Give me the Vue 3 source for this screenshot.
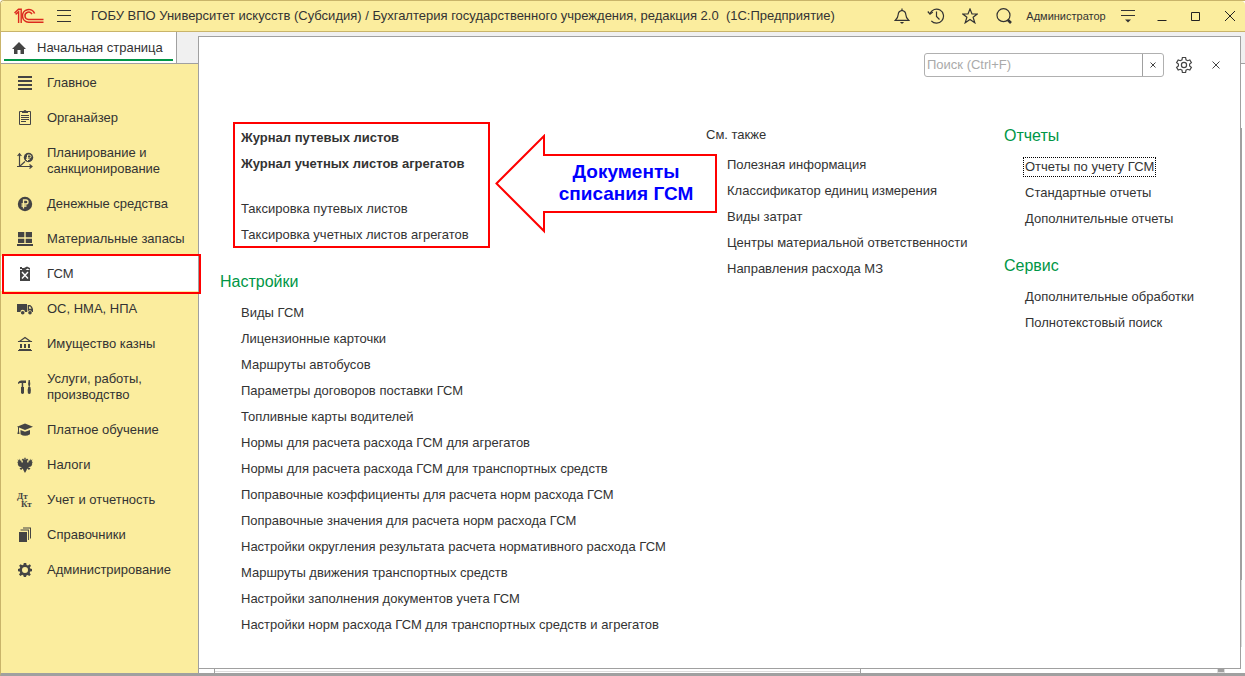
<script setup>
const sections = [
  { icon: 'lines', title: 'Главное' },
  { icon: 'clipboard', title: 'Органайзер' },
  { icon: 'plan', title: 'Планирование и санкционирование' },
  { icon: 'ruble', title: 'Денежные средства' },
  { icon: 'stock', title: 'Материальные запасы' },
  { icon: 'fuel', title: 'ГСМ', active: true },
  { icon: 'truck', title: 'ОС, НМА, НПА' },
  { icon: 'bank', title: 'Имущество казны' },
  { icon: 'tools', title: 'Услуги, работы, производство' },
  { icon: 'cap', title: 'Платное обучение' },
  { icon: 'eagle', title: 'Налоги' },
  { icon: 'ledger', title: 'Учет и отчетность' },
  { icon: 'books', title: 'Справочники' },
  { icon: 'gear', title: 'Администрирование' },
]
const journals = ['Журнал путевых листов', 'Журнал учетных листов агрегатов']
const taxation = ['Таксировка путевых листов', 'Таксировка учетных листов агрегатов']
const settings = [
  'Виды ГСМ',
  'Лицензионные карточки',
  'Маршруты автобусов',
  'Параметры договоров поставки ГСМ',
  'Топливные карты водителей',
  'Нормы для расчета расхода ГСМ для агрегатов',
  'Нормы для расчета расхода ГСМ для транспортных средств',
  'Поправочные коэффициенты для расчета норм расхода ГСМ',
  'Поправочные значения для расчета норм расхода ГСМ',
  'Настройки округления результата расчета нормативного расхода ГСМ',
  'Маршруты движения транспортных средств',
  'Настройки заполнения документов учета ГСМ',
  'Настройки норм расхода ГСМ для транспортных средств и агрегатов',
]
const seeAlso = [
  'Полезная информация',
  'Классификатор единиц измерения',
  'Виды затрат',
  'Центры материальной ответственности',
  'Направления расхода МЗ',
]
const reports = ['Отчеты по учету ГСМ', 'Стандартные отчеты', 'Дополнительные отчеты']
const service = ['Дополнительные обработки', 'Полнотекстовый поиск']
</script>

<template>
  <div class="window">
    <header class="titlebar">
      <svg class="logo" width="30" height="16" viewBox="0 0 30 16" fill="none" stroke="#dc2a1e">
        <path d="M.5 5 4.5 1.2H7.2V15M1.6 6.4 4.6 3.8V15" stroke-width="1.4" />
        <path d="M20.6 5.5A6.3 6.3 0 1 0 14.5 14.2H29.5" stroke-width="1.6" />
        <path d="M18 6.2A3.7 3.7 0 1 0 14.5 11.5H29.5" stroke-width="1.5" />
      </svg>
      <button class="burger" aria-label="Главное меню">
        <svg width="14" height="12" viewBox="0 0 14 12" stroke="#333"><path d="M0 .5H14M0 5.5H14M0 11.5H14" /></svg>
      </button>
      <h1>ГОБУ ВПО Университет искусств (Субсидия) / Бухгалтерия государственного учреждения, редакция 2.0&nbsp; (1С:Предприятие)</h1>
      <button class="tool" aria-label="Уведомления">
        <svg width="16" height="16" viewBox="0 0 16 16" fill="none" stroke="#333" stroke-width="1.2"><path d="M1.2 12.4Q4.2 9.6 4.2 6.5Q4.4 3.2 8 2.4Q11.6 3.2 11.8 6.5Q11.8 9.6 14.8 12.4ZM8 2.4V.5" /><path d="M6 14H10L8.8 15.5H7.2Z" fill="#333" stroke="none" /></svg>
      </button>
      <button class="tool" aria-label="История">
        <svg width="18" height="16" viewBox="0 0 18 16" fill="none" stroke="#333" stroke-width="1.2"><path d="M3 5.5A7 7 0 1 1 4.3 12.8M9.5 3.5V8.5L12.5 11.5" /><path d="M.8 3.5 3 6.2 5.8 4" /></svg>
      </button>
      <button class="tool" aria-label="Избранное">
        <svg width="16" height="16" viewBox="0 0 16 16" fill="none" stroke="#333" stroke-width="1.2"><path d="M8 1 10 6H15.2L11.1 9.3 12.8 14.8 8 11.5 3.2 14.8 4.9 9.3.8 6H6Z" /></svg>
      </button>
      <button class="tool" aria-label="Поиск">
        <svg width="16" height="16" viewBox="0 0 16 16" fill="none" stroke="#333" stroke-width="1.2"><circle cx="7.5" cy="7.2" r="6.5" /><path d="M11.7 11.8 15 15" stroke-width="2.6" /></svg>
      </button>
      <button class="user">Администратор</button>
      <button class="tool" aria-label="Настройки окна">
        <svg width="14" height="14" viewBox="0 0 14 14" stroke="#333"><path d="M0 1.5H14M0 6.5H14" /><path d="M4 10.5H10L7 13.5Z" fill="#333" stroke="none" /></svg>
      </button>
      <button class="tool" aria-label="Свернуть">
        <svg width="10" height="10" viewBox="0 0 10 10" stroke="#222"><path d="M.5 9.5H9.5" /></svg>
      </button>
      <button class="tool" aria-label="Развернуть">
        <svg width="10" height="10" viewBox="0 0 10 10" fill="none" stroke="#222"><path d="M.5 1.5H8.5V9.5H.5Z" /></svg>
      </button>
      <button class="tool last" aria-label="Закрыть">
        <svg width="12" height="12" viewBox="0 0 12 12" stroke="#222"><path d="M1 1 11 11M11 1 1 11" /></svg>
      </button>
    </header>

    <div class="body">
      <div class="left">
        <div class="tabs">
          <a href="#" class="tab">
            <svg width="14" height="12" viewBox="0 0 14 12" fill="#444"><path d="M7 0 14 7H12V12H8.5V8H5.5V12H2V7H0Z" /></svg>
            Начальная страница
          </a>
        </div>
        <nav class="sections">
          <a v-for="s in sections" :key="s.icon" href="#" :class="{ active: s.active }">
            <svg class="icon" width="18" height="18" viewBox="0 0 18 18" fill="#444" stroke="none">
              <path v-if="s.icon === 'lines'" d="M2 2H16V4H2ZM2 6H16V8H2ZM2 10H16V12H2ZM2 14H16V16H2Z" />
              <g v-else-if="s.icon === 'clipboard'">
                <path d="M3.5 2.5H14.5V15.5H3.5Z" fill="none" stroke="#444" />
                <path d="M6 4V2H7.5Q9 0 10.5 2H12V4ZM5 6H13V7H5ZM5 8H13V9H5ZM5 10H13V11H5ZM5 12H10V13H5Z" />
              </g>
              <g v-else-if="s.icon === 'plan'">
                <path d="M3.5 2.5V15M1 14.5H15M3.5 14.5 9 9.5M1.6 4 3.5 1.6 5.4 4M13.5 12.5 16 14.5 13.5 16.5" fill="none" stroke="#444" stroke-width="1.2" />
                <circle cx="12.5" cy="5.5" r="4.7" />
                <path d="M11.5 9V3H13.5Q15 3 15 4.5Q15 6 13.5 6H10M10 7.5H13.5" fill="none" stroke="#fbed9e" />
              </g>
              <g v-else-if="s.icon === 'ruble'">
                <circle cx="9" cy="9" r="7.2" />
                <path d="M7.5 13.5V5H10Q12 5 12 7Q12 9 10 9H5.5M5.5 11H10.5" fill="none" stroke="#fbed9e" stroke-width="1.3" />
              </g>
              <path v-else-if="s.icon === 'stock'" d="M2 2H8.3V7.3H2ZM9.7 2H16V7.3H9.7ZM2 8.7H8.3V13H2ZM9.7 8.7H16V13H9.7ZM1 14H17V16H1Z" />
              <g v-else-if="s.icon === 'fuel'">
                <path d="M4 2H6V3H8L11 1.5 14 3V5L11.5 3.5 9.5 5H14V16H4V5H6V4H4Z" />
                <path d="M6 7 12 13.5M12 7 6 13.5" stroke="#fff" stroke-width="1.4" />
              </g>
              <g v-else-if="s.icon === 'truck'">
                <path d="M1 4H11V12H9A2.3 2.3 0 0 0 4.4 12H1ZM11.7 5H14.2Q16.5 6.5 17 9V12H16A2.2 2.2 0 0 0 11.7 12ZM13 6.4V8.7H15.5L14.2 6.4Z" fill-rule="evenodd" />
                <circle cx="6.7" cy="12.7" r="1.8" /><circle cx="14" cy="12.7" r="1.8" />
              </g>
              <g v-else-if="s.icon === 'bank'">
                <path d="M3.5 6.5 9 2.6 14.5 6.5Z" fill="none" stroke="#444" stroke-width="1.2" />
                <path d="M2 6H16V7H2ZM4 9H6V13H4ZM8 9H10V13H8ZM12 9H14V13H12ZM3 14H15V15H3ZM2 15H16V16H2Z" />
              </g>
              <path v-else-if="s.icon === 'tools'" d="M2 4.5Q3.5 2 6 2.5H10V5H7.2V9H8V15Q6.5 17 5 15V9H5.7V5H4L2 6ZM12.6 2H13.8L14.3 6 13.6 9H14.4Q15.3 12 14.6 15.3Q13.2 16.8 11.9 15.3Q11.2 12 12.2 9H12.8L12.1 6Z" />
              <path v-else-if="s.icon === 'cap'" d="M9 2.5 17 5.8 9 9 3 6.6V10L3.6 13H1.4L2 10V6.2L1 5.8ZM4.5 9 9 10.8 14 9V13.2Q9 16.2 4.5 13.2Z" />
              <path v-else-if="s.icon === 'eagle'" d="M8.2 2.4 9 1.2 9.8 2.4 9.6 4 11 2.6 12.3 3.7 11.2 4.8 11.2 6.6 12.4 6.4 13 3.5 13.8 5.2 14.4 2.5 15 4.8 16.3 3 15.8 6.3 16.8 5.4 15.8 8.4 16.4 8.4 14.9 10.5 12 11.2 14.5 12.2 13 14 11.2 12.5 10.4 14.5 9 17 7.6 14.5 6.8 12.5 5 14 3.5 12.2 6 11.2 3.1 10.5 1.6 8.4 2.2 8.4 1.2 5.4 2.2 6.3 1.7 3 3 4.8 3.6 2.5 4.2 5.2 5 3.5 5.6 6.4 6.8 6.6 6.8 4.8 5.7 3.7 7 2.6 8.4 4Z" />
              <g v-else-if="s.icon === 'ledger'" class="glyphs">
                <text x="1" y="8">Дт</text><text x="5" y="16">Кт</text>
              </g>
              <path v-else-if="s.icon === 'books'" d="M3 6H11V16H3ZM4.5 3.5H12.9V14H12V4.5H4.5ZM7 1.5H15V12.5H14V2.5H7Z" />
              <path v-else d="M7.8 2H10.2L10.6 4 12 4.6 13.7 3.3 15 4.8 13.8 6.5 14.2 7.6 16 8V10.2L14.2 10.6 13.7 12 14.8 13.6 13.3 15 11.7 13.9 10.4 14.4 10 16H7.8L7.4 14.4 6.2 13.8 4.5 15 3 13.4 4.2 11.8 3.7 10.5 2 10.2V7.9L3.7 7.5 4.2 6.3 3.1 4.7 4.6 3.2 6.2 4.3 7.4 3.8ZM9 6A3 3 0 1 0 9 12A3 3 0 1 0 9 6Z" fill-rule="evenodd" />
            </svg>
            <span>{{ s.title }}</span>
          </a>
        </nav>
      </div>

      <div class="workspace">
        <div class="thumb"></div>
        <main class="panel">
          <div class="searchbar">
            <form class="search" @submit.prevent>
              <input type="text" placeholder="Поиск (Ctrl+F)" aria-label="Поиск" />
              <button type="button" aria-label="Очистить">
                <svg width="6" height="6" viewBox="0 0 6 6" stroke="#444"><path d="M.5 .5 5.5 5.5M5.5 .5 .5 5.5" /></svg>
              </button>
            </form>
            <button class="plain" aria-label="Настройка">
              <svg width="18" height="18" viewBox="0 0 18 18" fill="none" stroke="#444" stroke-width="1.2"><path d="M7.4 1.5H10.6L11 3.8 12.6 4.7 14.8 3.9 16.4 6.6 14.6 8.1V9.9L16.4 11.4 14.8 14.1 12.6 13.3 11 14.2 10.6 16.5H7.4L7 14.2 5.4 13.3 3.2 14.1 1.6 11.4 3.4 9.9V8.1L1.6 6.6 3.2 3.9 5.4 4.7 7 3.8Z" /><circle cx="9" cy="9" r="2.6" /></svg>
            </button>
            <button class="plain" aria-label="Закрыть панель">
              <svg width="8" height="8" viewBox="0 0 8 8" stroke="#444"><path d="M.5 .5 7.5 7.5M7.5 .5 .5 7.5" /></svg>
            </button>
          </div>

          <div class="columns">
            <section class="first">
              <div class="documents">
                <ul class="bold"><li v-for="t in journals" :key="t"><a href="#">{{ t }}</a></li></ul>
                <ul><li v-for="t in taxation" :key="t"><a href="#">{{ t }}</a></li></ul>
                <div class="callout">
                  <svg width="222" height="100" viewBox="0 0 222 100" fill="#fff" stroke="#f00" stroke-width="2"><path d="M1.5 49.5 49 2V21H221V78H49V97Z" /></svg>
                  <p>Документы<br />списания ГСМ</p>
                </div>
              </div>
              <h2>Настройки</h2>
              <ul class="inset"><li v-for="t in settings" :key="t"><a href="#">{{ t }}</a></li></ul>
            </section>
            <section class="second">
              <h3>См. также</h3>
              <ul class="inset"><li v-for="t in seeAlso" :key="t"><a href="#">{{ t }}</a></li></ul>
            </section>
            <section class="third">
              <h2>Отчеты</h2>
              <ul class="inset"><li v-for="(t, i) in reports" :key="t"><a href="#" :class="{ focused: i === 0 }">{{ t }}</a></li></ul>
              <h2 class="next">Сервис</h2>
              <ul class="inset"><li v-for="t in service" :key="t"><a href="#">{{ t }}</a></li></ul>
            </section>
          </div>
        </main>
        <div class="strip"><i class="pane"></i><i class="nub"></i></div>
      </div>
    </div>
  </div>
</template>

<style>
body { background: #fff; }
</style>

<style scoped>
* { box-sizing: border-box; }
.window {
  display: flex;
  flex-direction: column;
  min-height: 100vh;
  border-top: 1px solid #c9b46a;
  border-left: 1px solid #c9b46a;
  border-bottom: 3px solid #a0a0a0;
  border-top-left-radius: 4px;
  font: 13px/16px "Liberation Sans", Arial, sans-serif;
  color: #333;
}
a { color: inherit; text-decoration: none; }
button { border: 0; padding: 0; background: none; font: inherit; color: inherit; display: flex; align-items: center; justify-content: center; }
svg { display: block; flex: none; }
h1, h2, h3, p, ul { margin: 0; padding: 0; font-weight: normal; }
ul { list-style: none; display: flex; flex-direction: column; gap: 10px; }
li { display: flex; }

.titlebar {
  display: flex;
  align-items: center;
  height: 31px;
  background: #fbed9e;
  border-bottom: 1px solid #c9b46a;
  border-radius: 4px 4px 0 0;
}
.logo { margin-left: 13px; }
.burger { width: 14px; height: 30px; margin: 0 20px 0 13px; }
h1 { flex: 1; font-size: 13px; line-height: 16px; white-space: nowrap; overflow: hidden; }
.tool { width: 34px; height: 30px; }
.tool.last { width: 32px; padding-left: 2px; }
.user { width: 90px; font-size: 11px; }

.body { flex: 1; display: grid; grid-template-columns: 197px 1fr; }
.left { display: flex; flex-direction: column; background: #fbed9e; }
.tabs { height: 32px; background: #f0f0f0; border-bottom: 1px solid #a0a0a0; display: flex; }
.tab {
  position: relative;
  display: flex;
  align-items: center;
  gap: 11px;
  width: 176px;
  padding-left: 11px;
  background: #fff;
  border-right: 1px solid #a0a0a0;
}
.tab::after { content: ""; position: absolute; left: 3px; right: 3px; bottom: 2px; height: 2px; background: #009646; }
.sections { display: flex; flex-direction: column; padding-top: 1px; }
.sections a {
  display: flex;
  align-items: center;
  gap: 13px;
  padding: 10px 8px 9px 15px;
}
.sections .active {
  position: relative;
  background: #fff;
}
.sections .active::after { content: ""; position: absolute; inset: -2px -3px -3px 1px; border: 2px solid #f00; z-index: 2; }
.icon { margin: -1px 0; }
.glyphs { font: bold 9px "Liberation Serif", serif; }

.workspace {
  position: relative;
  display: flex;
  flex-direction: column;
  padding: 4px 4px 0 0;
  background: linear-gradient(#f0f0f0 31px, #a0a0a0 31px, #a0a0a0 32px, #fff 32px);
}
.thumb { position: absolute; top: 96px; bottom: 26px; right: 3px; width: 1px; background: linear-gradient(#a0a0a0 87%, #dcdcdc 87%); }
.panel { flex: 1; background: #fff; border: 1px solid #a0a0a0; padding: 16px 20px 24px 21px; }
.strip { height: 4px; display: flex; justify-content: space-between; padding: 0 16px 0 15px; border-left: 1px solid #a0a0a0; }
.pane { width: 64%; border: solid #a0a0a0; border-width: 0 1px; background: linear-gradient(#fff 2px, #ddd 2px, #ddd 3px, #fff 3px); }
.nub { width: 8px; height: 4px; background: #a0a0a0; border: solid #ddd; border-width: 0 1px 1px; }

.searchbar { display: flex; justify-content: flex-end; align-items: center; height: 24px; }
.search { display: flex; width: 240px; height: 24px; border: 1px solid #b0b0b0; border-radius: 3px; margin-right: 11px; }
.search input { flex: 1; min-width: 0; border: 0; outline: 0; padding: 0 2px; font: inherit; background: none; border-radius: 3px; }
.search input::placeholder { color: #aaa; opacity: 1; }
.search button { width: 21px; border-left: 1px solid #a0a0a0; }
.plain { width: 18px; height: 24px; }
.plain + .plain { width: 9px; margin-left: 18px; }

.columns { display: grid; grid-template-columns: 486fr 298fr 216fr; margin-top: 45px; }
.documents {
  position: relative;
  width: 257px;
  margin-left: 13px;
  padding: 6px 5px 3px 6px;
  border: 2px solid #f00;
}
.documents ul + ul { margin-top: 29px; }
.bold { font-weight: bold; }
.callout { position: absolute; left: 260px; top: 10px; }
.callout p {
  position: absolute;
  top: 27px;
  left: 50px;
  right: 10px;
  text-align: center;
  font: bold 19px/22px "Liberation Sans", Arial, sans-serif;
  color: #00f;
}
h2 { font-size: 16px; line-height: 20px; color: #009646; }
h3 { font-size: 13px; line-height: 16px; }
h2 + .inset { margin-top: 13px; }
h3 + .inset { margin-top: 14px; }
.inset { padding-left: 21px; }
.first h2 { margin-top: 24px; }
.second { padding-top: 5px; }
.third { padding-top: 4px; }
.third .next { margin-top: 29px; }
.focused { outline: 1px dotted #000; outline-offset: 1px; }
li a { white-space: nowrap; }
</style>
